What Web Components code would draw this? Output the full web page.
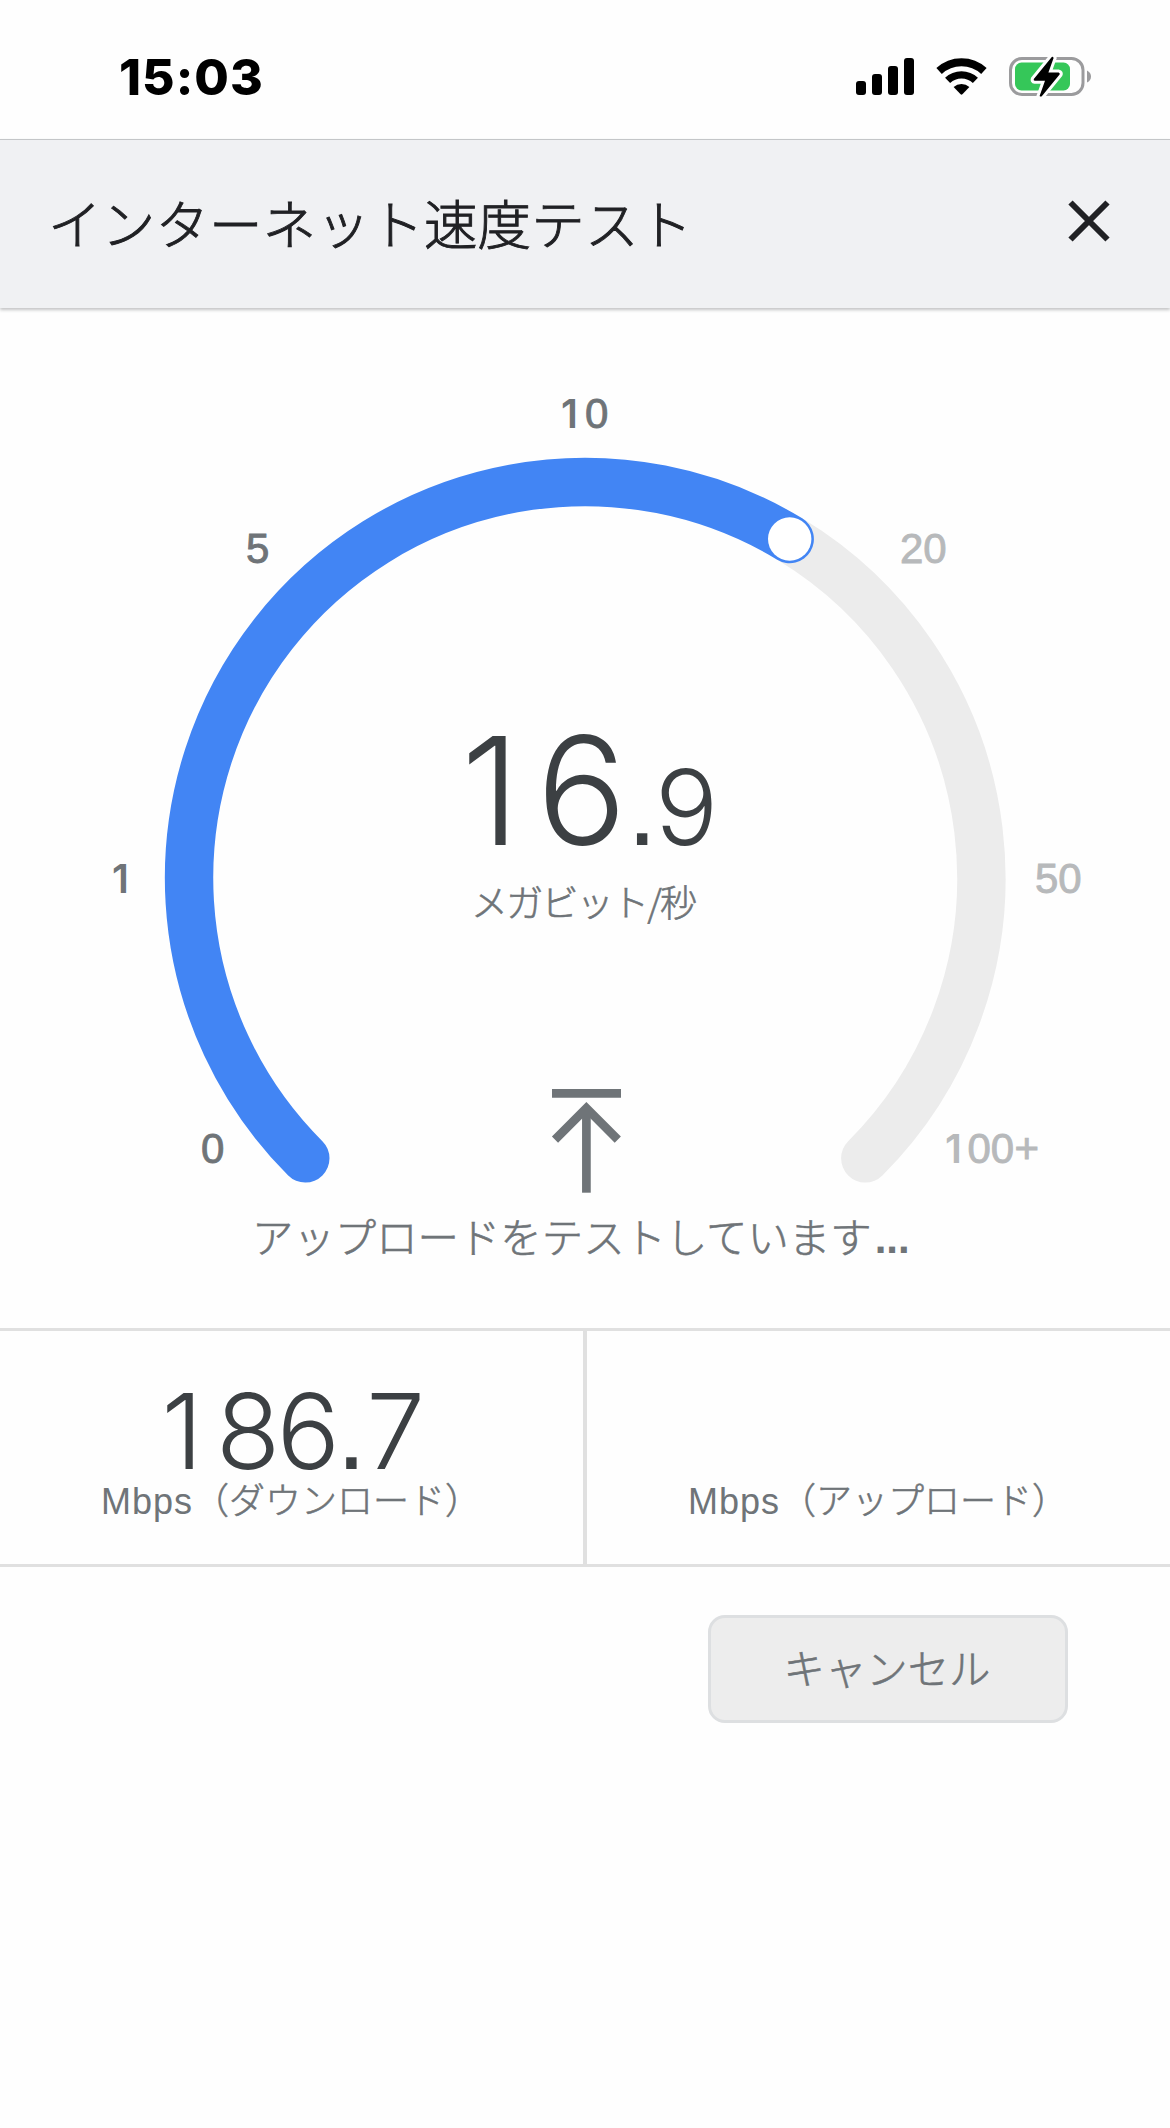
<!DOCTYPE html>
<html lang="ja">
<head>
<meta charset="utf-8">
<title>インターネット速度テスト</title>
<style>
  body {
    margin: 0;
    background: #fefefe;
    font-family: "Liberation Sans", "Noto Sans CJK JP", sans-serif;
    color: #6f7478;
  }
</style>
</head>
<body>
<speed-test-page></speed-test-page>
<script>
class PhoneStatusBar extends HTMLElement {
  connectedCallback() {
    this.attachShadow({ mode: 'open' });
    this.shadowRoot.innerHTML = `
      <style>
        :host {
          display: flex;
          justify-content: space-between;
          align-items: center;
          box-sizing: border-box;
          height: 139px;
          padding: 16px 77px 0 119px;
          color: #000;
        }
        .time {
          font: 800 50px/60px Inter, sans-serif;
          letter-spacing: 1px;
          margin-bottom: 1px;
        }
        svg { display: block; margin-bottom: 1px; }
      </style>
      <span class="time"><slot></slot></span>
      <svg width="237" height="44" viewBox="856 55 237 44">
        <rect x="856" y="81" width="10" height="14" rx="3"/>
        <rect x="872" y="74" width="10" height="21" rx="3"/>
        <rect x="888" y="66" width="10" height="29" rx="3"/>
        <rect x="904" y="58" width="10" height="37" rx="3"/>
        <g fill="none" stroke="#000">
          <path stroke-width="8" d="M939.1 71 A33 33 0 0 1 983.9 71"/>
          <path stroke-width="7.4" d="M947.6 80.4 A20.3 20.3 0 0 1 975.4 80.4"/>
        </g>
        <path d="M953.6 87 A12 12 0 0 1 969.4 87 L962.4 94.3 Q961.5 95.2 960.6 94.3 Z"/>
        <rect x="1010.5" y="58.5" width="72.5" height="36" rx="11.5" fill="none" stroke="#9b9b9d" stroke-width="3"/>
        <rect x="1015" y="62.5" width="55" height="28" rx="6.5" fill="#35c759"/>
        <path fill="#9b9b9d" d="M1087 70.5 Q1091 72.5 1091 76.5 T1087 82.5 Z"/>
        <path d="M1051.8 57 L1033.8 79 Q1033.2 80.6 1034.8 80.8 L1045 80.8 L1039.6 96 Q1040.8 97.2 1042 96 L1059.6 74.4 Q1060.2 73 1058.6 72.6 L1048.4 72.6 L1053.6 58 Q1053 56.4 1051.8 57 Z"
          stroke="#fefefe" stroke-width="6" paint-order="stroke"/>
      </svg>
    `;
  }
}
customElements.define('phone-status-bar', PhoneStatusBar);

class DialogHeader extends HTMLElement {
  connectedCallback() {
    this.attachShadow({ mode: 'open' });
    this.shadowRoot.innerHTML = `
      <style>
        :host {
          display: flex;
          justify-content: space-between;
          align-items: center;
          box-sizing: border-box;
          height: 169px;
          padding: 0 59px 0 48px;
          background: #f0f1f3;
          border-top: 1px solid #c4c6c8;
          box-shadow: 0 2px 3px rgba(60, 64, 67, 0.3);
          color: #202124;
        }
        h1 {
          margin: 5px 0 0;
          font-size: 53.5px;
          font-weight: 300;
          letter-spacing: 0.2px;
          line-height: 80px;
          -webkit-text-stroke: 0.9px #202124;
        }
        button {
          display: block;
          padding: 0;
          border: 0;
          background: none;
          margin-bottom: 6px;
        }
        svg { display: block; }
      </style>
      <h1><slot></slot></h1>
      <button aria-label="閉じる">
        <svg width="44" height="44" viewBox="0 0 44 44" stroke="#202124" stroke-width="6">
          <path d="M3.5 3.5 L40.5 40.5 M40.5 3.5 L3.5 40.5"/>
        </svg>
      </button>
    `;
  }
}
customElements.define('dialog-header', DialogHeader);

class SpeedGauge extends HTMLElement {
  connectedCallback() {
    this.attachShadow({ mode: 'open' });
    this.shadowRoot.innerHTML = `
      <style>
        :host { display: block; height: 1020px; }
        svg { display: block; }
        .arc { fill: none; stroke-width: 48.4; stroke-linecap: round; }
        .tick { font: 42px "Liberation Sans", sans-serif; fill: #6f7478; stroke: #6f7478; stroke-width: 0.9; }
        .off { fill: #b7b9bb; stroke: #b7b9bb; }
        .one { font: 600 40px Inter, sans-serif; stroke: none; }
        .value { font-family: Inter, sans-serif; font-weight: 300; fill: #3c4043; }
        .dot { font-family: "Liberation Sans", sans-serif; font-weight: 400; }
        .ja { font-family: "Noto Sans CJK JP", sans-serif; font-weight: 300; fill: #6f7478; stroke: #6f7478; stroke-width: 0.6; }
      </style>
      <svg width="1170" height="1020" viewBox="0 0 1170 1020">
        <path class="arc" stroke="#ececec" d="M789.7 231 A396 396 0 0 1 865.3 850.3"/>
        <path class="arc" stroke="#4285f4" d="M305.3 850.3 A396 396 0 0 1 789.7 231"/>
        <circle cx="789.7" cy="231" r="21.7" fill="#fff"/>

        <text class="tick" x="201" y="855">0</text>
        <text class="tick one" x="112" y="585">1</text>
        <text class="tick" x="246" y="255">5</text>
        <text class="tick" y="120"><tspan class="one" x="561">1</tspan><tspan x="585">0</tspan></text>
        <text class="tick off" x="900" y="255">20</text>
        <text class="tick off" x="1035" y="585">50</text>
        <text class="tick off" y="855"><tspan class="one" x="945">1</tspan><tspan x="967.5 990.7 1014.5">00+</tspan></text>

        <text class="value" y="537"><tspan font-size="150" x="461 536.5">16</tspan><tspan class="dot" font-size="109" x="627">.</tspan><tspan font-size="105" x="655">9</tspan></text>
        <text class="ja" x="471" y="609" font-size="37" textLength="226">メガビット/秒</text>

        <g fill="none" stroke="#6f7478" stroke-width="8.7">
          <path d="M552 785.4 H621"/>
          <path d="M586.4 884.7 V802"/>
          <path d="M555 831.6 L586.4 800.2 L617.8 831.6"/>
        </g>
        <text class="ja" x="252" y="944.5" font-size="41.4">アップロードをテストしています<tspan dx="3" font-family="Liberation Sans" font-weight="700" font-size="42" stroke="none">...</tspan></text>
      </svg>
    `;
  }
}
customElements.define('speed-gauge', SpeedGauge);

class SpeedResult extends HTMLElement {
  connectedCallback() {
    const number = this.getAttribute('number') || '';
    this.attachShadow({ mode: 'open' });
    this.shadowRoot.innerHTML = `
      <style>
        :host {
          display: flex;
          flex-direction: column;
          align-items: center;
          padding-top: 47px;
        }
        .number {
          height: 102px;
          font: 300 105px/106px Inter, sans-serif;
          letter-spacing: -3.5px;
          color: #3c4043;
        }
        .one { display: inline-block; width: 54.5px; }
        .dot {
          display: inline-block;
          width: 30px;
          font: 109px/100px "Liberation Sans", sans-serif;
          letter-spacing: 0;
        }
        .unit {
          display: flex;
          font-size: 36px;
          line-height: 44px;
          margin-right: 1px;
          white-space: nowrap;
        }
        .mbps { letter-spacing: 1px; }
        .kind { font-weight: 300; -webkit-text-stroke: 0.6px; }
      </style>
      <div class="number">${number.replace('1', '<span class="one">1</span>').replace('.', '<span class="dot">.</span>')}</div>
      <div class="unit"><span class="mbps">Mbps</span><span class="kind"><slot></slot></span></div>
    `;
  }
}
customElements.define('speed-result', SpeedResult);

class ResultRow extends HTMLElement {
  connectedCallback() {
    this.attachShadow({ mode: 'open' });
    this.shadowRoot.innerHTML = `
      <style>
        :host {
          display: grid;
          grid-template-columns: 1fr 1fr;
          box-sizing: border-box;
          height: 239px;
          border-top: 3px solid #e0e0e0;
          border-bottom: 3px solid #e0e0e0;
        }
        ::slotted(:first-child) { border-right: 4px solid #e0e0e0; margin-right: -2px; }
        ::slotted(:last-child) { margin-left: 2px; }
      </style>
      <slot></slot>
    `;
  }
}
customElements.define('result-row', ResultRow);

class CancelButton extends HTMLElement {
  connectedCallback() {
    this.attachShadow({ mode: 'open' });
    this.shadowRoot.innerHTML = `
      <style>
        :host { display: flex; justify-content: flex-end; padding: 48px 102px 0 0; }
        button {
          box-sizing: border-box;
          width: 360px;
          height: 108px;
          padding: 0 2px 6px 0;
          border: 3px solid #dddfe1;
          border-radius: 17px;
          background: #ededed;
          color: #6f7478;
          font: 300 41.4px "Noto Sans CJK JP", sans-serif;
          -webkit-text-stroke: 0.6px #6f7478;
        }
      </style>
      <button><slot></slot></button>
    `;
  }
}
customElements.define('cancel-button', CancelButton);

class SpeedTestPage extends HTMLElement {
  connectedCallback() {
    this.attachShadow({ mode: 'open' });
    this.shadowRoot.innerHTML = `
      <style>
        :host {
          display: flex;
          flex-direction: column;
          width: 1170px;
          height: 2128px;
          overflow: hidden;
        }
      </style>
      <phone-status-bar>15:03</phone-status-bar>
      <dialog-header>インターネット速度テスト</dialog-header>
      <speed-gauge></speed-gauge>
      <result-row>
        <speed-result number="186.7">（ダウンロード）</speed-result>
        <speed-result>（アップロード）</speed-result>
      </result-row>
      <cancel-button>キャンセル</cancel-button>
    `;
  }
}
customElements.define('speed-test-page', SpeedTestPage);
</script>
</body>
</html>
